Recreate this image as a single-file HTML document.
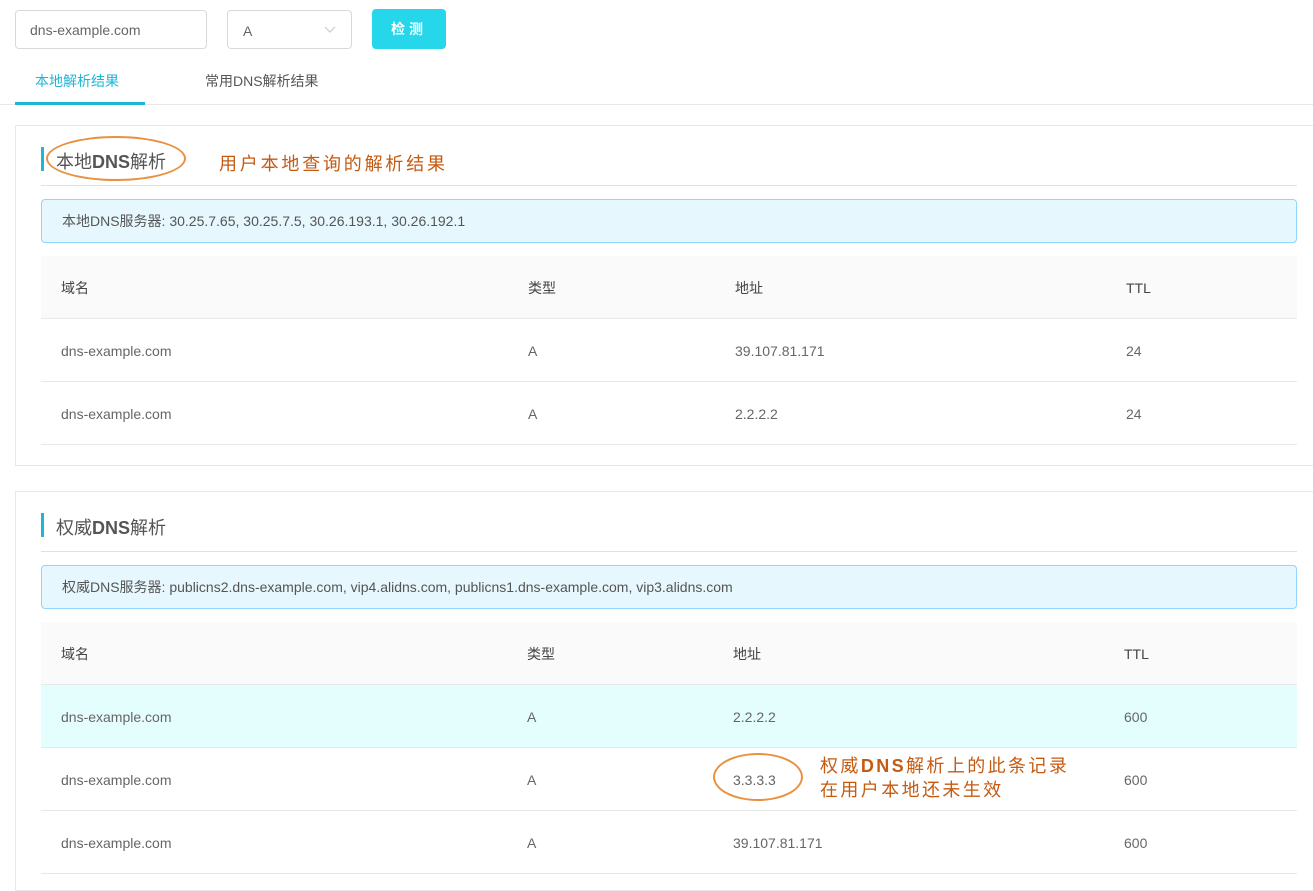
<!DOCTYPE html>
<html><head><meta charset="utf-8"><style>
*{box-sizing:border-box;margin:0;padding:0}
body{width:1313px;height:878px;overflow:hidden;background:#fff;font-family:"Liberation Sans","Noto Sans CJK SC",sans-serif;color:#555;font-size:14px;position:relative}
.a{position:absolute;white-space:nowrap}
.box{position:absolute;border:1px solid #d9d9d9;border-radius:4px}
.card{position:absolute;left:15px;width:1310px;border:1px solid #e8e8e8}
.bar{position:absolute;left:25px;width:3px;height:24px;background:#1fb6d4}
.ttl{position:absolute;left:40px;font-size:18px;color:#555}
.hr{position:absolute;left:25px;width:1256px;height:1px;background:#e0e0e0}
.info{position:absolute;left:25px;width:1256px;height:44px;background:#e6f7fe;border:1px solid #91d5ff;border-radius:4px;line-height:42px;padding-left:20px;color:#555}
.row{position:absolute;left:25px;width:1256px;height:63px;border-bottom:1px solid #e8e8e8;line-height:64px;color:#666}
.row span{position:absolute}
.hd{background:#fafafa;color:#444}
.ann{position:absolute;color:#c55a11;font-size:18px;white-space:nowrap}
.ell{position:absolute;border:2px solid #e8913f;border-radius:50%}
</style></head><body>
<div class="box" style="left:15px;top:10px;width:192px;height:39px;line-height:39px;padding-left:14px;color:#666">dns-example.com</div>
<div class="box" style="left:227px;top:10px;width:125px;height:39px;line-height:41px;padding-left:15px;color:#666">A
<svg style="position:absolute;left:96px;top:15px" width="12" height="8" viewBox="0 0 12 8"><path d="M1 1l5 5 5-5" fill="none" stroke="#ccc" stroke-width="1.2"/></svg></div>
<div class="a" style="left:372px;top:9px;width:74px;height:40px;background:#26d7eb;border-radius:4px;color:#fff;font-weight:bold;text-align:center;line-height:40px;letter-spacing:4px">检测</div>
<div class="a" style="left:35px;top:71px;color:#1fb6d4">本地解析结果</div>
<div class="a" style="left:205px;top:71px;color:#555">常用DNS解析结果</div>
<div class="a" style="left:0;top:104px;width:1313px;height:1px;background:#e8e8e8"></div>
<div class="a" style="left:15px;top:102px;width:130px;height:3px;background:#1fb6d4"></div>

<div class="card" style="top:125px;height:341px">
<div class="bar" style="top:21px"></div>
<div class="ttl" style="top:22px">本地<b>DNS</b>解析</div>
<div class="hr" style="top:59px"></div>
<div class="info" style="top:73px">本地DNS服务器: 30.25.7.65, 30.25.7.5, 30.26.193.1, 30.26.192.1</div>
<div class="row hd" style="top:130px"><span style="left:20px">域名</span><span style="left:487px">类型</span><span style="left:694px">地址</span><span style="left:1085px">TTL</span></div>
<div class="row" style="top:193px"><span style="left:20px">dns-example.com</span><span style="left:487px">A</span><span style="left:694px">39.107.81.171</span><span style="left:1085px">24</span></div>
<div class="row" style="top:256px"><span style="left:20px">dns-example.com</span><span style="left:487px">A</span><span style="left:694px">2.2.2.2</span><span style="left:1085px">24</span></div>
</div>

<div class="card" style="top:491px;height:400px">
<div class="bar" style="top:21px"></div>
<div class="ttl" style="top:22px">权威<b>DNS</b>解析</div>
<div class="hr" style="top:59px"></div>
<div class="info" style="top:73px">权威DNS服务器: publicns2.dns-example.com, vip4.alidns.com, publicns1.dns-example.com, vip3.alidns.com</div>
<div class="row hd" style="top:130px"><span style="left:20px">域名</span><span style="left:486px">类型</span><span style="left:692px">地址</span><span style="left:1083px">TTL</span></div>
<div class="row" style="top:193px;background:#e4fdfd"><span style="left:20px">dns-example.com</span><span style="left:486px">A</span><span style="left:692px">2.2.2.2</span><span style="left:1083px">600</span></div>
<div class="row" style="top:256px"><span style="left:20px">dns-example.com</span><span style="left:486px">A</span><span style="left:692px">3.3.3.3</span><span style="left:1083px">600</span></div>
<div class="row" style="top:319px"><span style="left:20px">dns-example.com</span><span style="left:486px">A</span><span style="left:692px">39.107.81.171</span><span style="left:1083px">600</span></div>
</div>

<div class="ell" style="left:46px;top:136px;width:140px;height:45px"></div>
<div class="ann" style="left:219px;top:150px;letter-spacing:2.8px">用户本地查询的解析结果</div>
<div class="ell" style="left:713px;top:753px;width:90px;height:48px"></div>
<div class="ann" style="left:820px;top:754px;line-height:24px;letter-spacing:2.4px">权威<b>DNS</b>解析上的此条记录<br>在用户本地还未生效</div>
</body></html>
